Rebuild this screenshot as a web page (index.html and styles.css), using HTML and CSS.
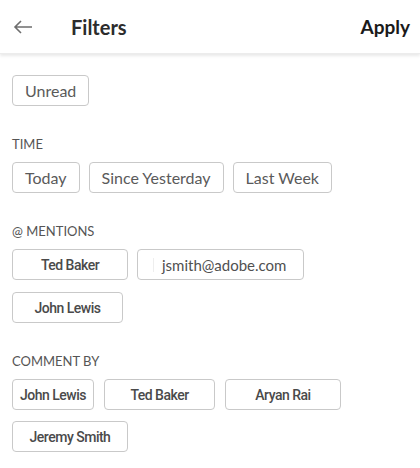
FILE: index.html
```html
<!DOCTYPE html>
<html lang="en">
<head>
    <meta charset="UTF-8">
    <meta name="viewport" content="width=device-width, initial-scale=1.0">
    <title>Filters</title>
    <link rel="stylesheet" href="styles.css">
</head>
<body>
    <div class="header">
        <button class="back" aria-label="Back">
            <svg width="20" height="14" viewBox="0 0 20 14">
                <path d="M19 7H2M8 1L2 7l6 6" fill="none" stroke="#6e6e6e" stroke-width="1.6"/>
            </svg>
        </button>
        <div class="title">Filters</div>
        <button class="apply">Apply</button>
    </div>

    <div class="content">
        <div class="chips">
            <button class="chip">Unread</button>
        </div>

        <div class="section">
            <div class="label">TIME</div>
            <div class="chips">
                <button class="chip">Today</button>
                <button class="chip">Since Yesterday</button>
                <button class="chip">Last Week</button>
            </div>
        </div>

        <div class="section">
            <div class="label">@ MENTIONS</div>
            <div class="chips">
                <button class="chip name w116">Ted Baker</button>
                <button class="chip email w167"><span class="caret"></span>jsmith@adobe.com</button>
                <button class="chip name w111">John Lewis</button>
            </div>
        </div>

        <div class="section">
            <div class="label">COMMENT BY</div>
            <div class="chips wide">
                <button class="chip name w82">John Lewis</button>
                <button class="chip name w111">Ted Baker</button>
                <button class="chip name w116">Aryan Rai</button>
                <button class="chip name w116">Jeremy Smith</button>
            </div>
        </div>
    </div>
</body>
</html>
```

FILE: styles.css
```css
* {
    margin: 0;
    padding: 0;
    box-sizing: border-box;
    font-family: Lato, "Open Sans", sans-serif;
}

body {
    background-color: #fff;
    color: #4b4b4b;
}

button {
    border: none;
    background: none;
    cursor: pointer;
}

.header {
    display: flex;
    align-items: center;
    height: 54px;
    padding: 0 10px 0 13px;
    box-shadow: 0 2px 3px rgba(0, 0, 0, 0.09);
    border-bottom: 1px solid #ececec;
}

.back {
    display: flex;
    align-items: center;
    width: 20px;
    height: 20px;
}

.title {
    flex: 1;
    margin-left: 38px;
    font-size: 20px;
    font-weight: 700;
    color: #2c2c2c;
}

.apply {
    font-size: 19px;
    font-weight: 700;
    color: #1a1a1a;
}

.content {
    padding: 21px 12px;
}

.section {
    margin-top: 30px;
}

.label {
    height: 16px;
    line-height: 16px;
    margin-bottom: 10px;
    font-size: 13px;
    color: #555;
}

.chips {
    display: flex;
    flex-wrap: wrap;
    gap: 12px 9px;
}

.chips.wide {
    gap: 11px 10px;
}

.chip {
    display: flex;
    align-items: center;
    justify-content: center;
    height: 31px;
    padding: 0 12px;
    border: 1px solid #c9c9c9;
    border-radius: 4px;
    font-size: 16px;
    color: #5a5a5a;
    white-space: nowrap;
}

.name {
    padding: 0 4px;
    font-family: Roboto, sans-serif;
    font-size: 14px;
    font-weight: 500;
    letter-spacing: -0.5px;
    color: #4a4a4a;
}

.email {
    justify-content: flex-start;
    padding-left: 15px;
    font-size: 15px;
    color: #505050;
}

.caret {
    width: 1px;
    height: 14px;
    margin-right: 8px;
    background-color: #eee;
}

.w82 { width: 82px; }
.w111 { width: 111px; }
.w116 { width: 116px; }
.w167 { width: 167px; }
```
